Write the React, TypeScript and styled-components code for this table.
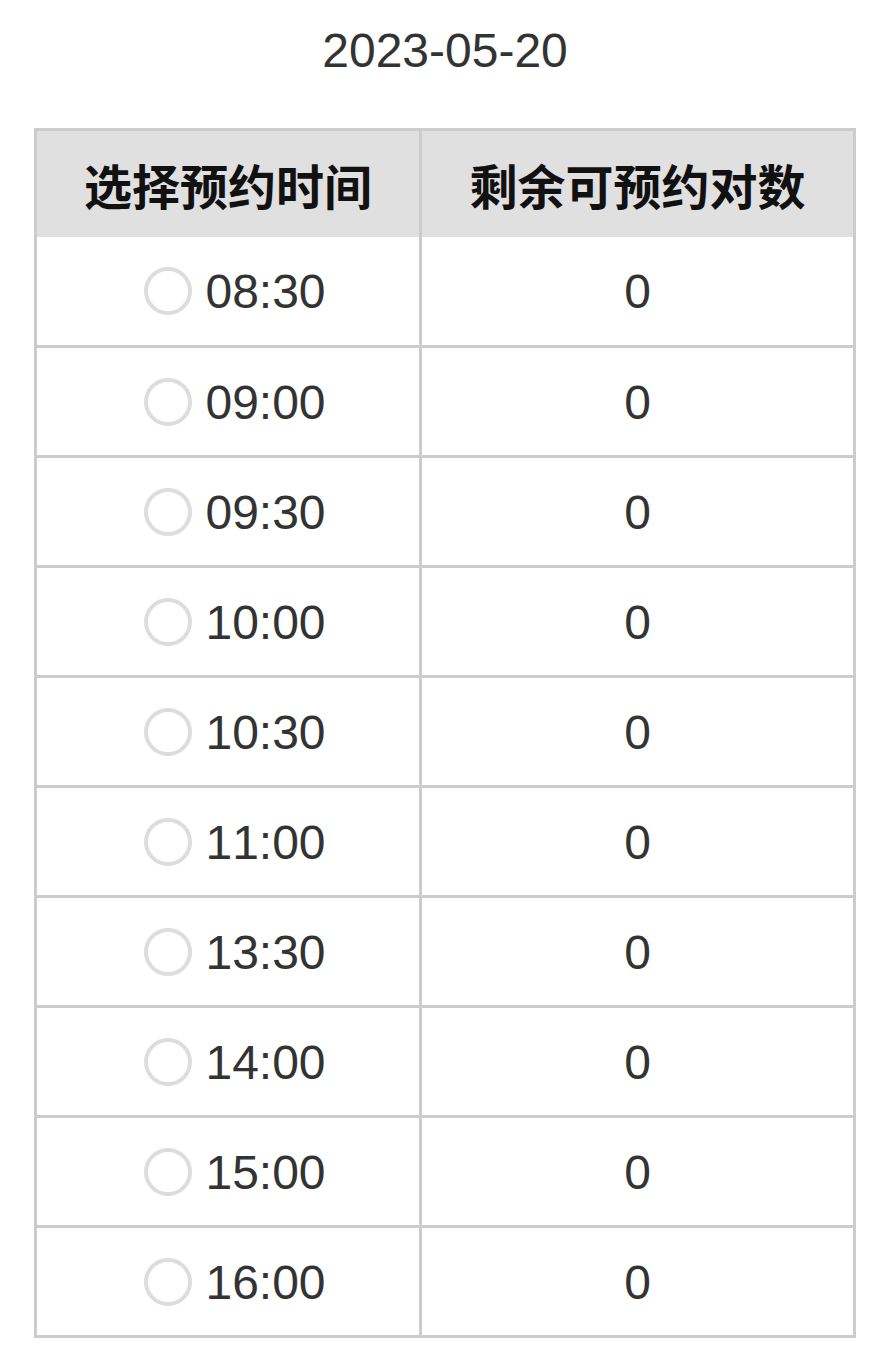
import React from "react";
import styled, { createGlobalStyle } from "styled-components";

const GlobalStyle = createGlobalStyle`
  html, body {
    margin: 0;
    padding: 0;
    background: #ffffff;
  }
  body {
    font-family: "Liberation Sans", Arial, "Noto Sans CJK SC", sans-serif;
    color: #333333;
  }
`;

const Page = styled.div`
  width: 822px;
  margin-left: 34px;
  padding-top: 23px;
  padding-bottom: 20px;
`;

const Title = styled.div`
  text-align: center;
  font-size: 48px;
  line-height: 56px;
  color: #333333;
  margin-bottom: 49px;
`;

const Table = styled.div`
  border: 3px solid #cccccc;
  display: flex;
  flex-direction: column;
`;

const Row = styled.div<{ $header?: boolean; $first?: boolean }>`
  display: grid;
  grid-template-columns: 385px 431px;
  height: ${(p) => (p.$header ? 106 : p.$first ? 108 : 107)}px;
  background: ${(p) => (p.$header ? "#e0e0e0" : "#ffffff")};
  border-top: ${(p) => (p.$header || p.$first ? "none" : "3px solid #cccccc")};
`;

const Cell = styled.div<{ $left?: boolean; $header?: boolean; $shift?: number }>`
  display: flex;
  align-items: center;
  justify-content: center;
  box-sizing: border-box;
  border-right: ${(p) => (p.$left ? "3px solid #cccccc" : "none")};
  padding-left: ${(p) => p.$shift ?? 0}px;
  font-size: 48px;
  font-weight: ${(p) => (p.$header ? 700 : 400)};
  color: ${(p) => (p.$header ? "#111111" : "#333333")};
  font-family: ${(p) =>
    p.$header
      ? `"Noto Sans CJK SC", "Liberation Sans", sans-serif`
      : `"Liberation Sans", Arial, "Noto Sans CJK SC", sans-serif`};
`;

const Radio = styled.span`
  display: inline-block;
  box-sizing: border-box;
  width: 48px;
  height: 48px;
  border-radius: 50%;
  border: 4px solid #dddddd;
  background: #ffffff;
  margin-right: 13px;
  flex: none;
`;

const TimeText = styled.span`
  line-height: 1;
  font-kerning: none;
  font-variant-numeric: tabular-nums;
  margin-top: 2px;
`;

const slots = [
  "08:30",
  "09:00",
  "09:30",
  "10:00",
  "10:30",
  "11:00",
  "13:30",
  "14:00",
  "15:00",
  "16:00",
];

export default function App() {
  return (
    <>
      <GlobalStyle />
      <Page>
        <Title>2023-05-20</Title>
        <Table>
          <Row $header>
            <Cell $left $header>
              选择预约时间
            </Cell>
            <Cell $header>剩余可预约对数</Cell>
          </Row>
          {slots.map((t, i) => (
            <Row key={t} $first={i === 0}>
              <Cell $left $shift={14}>
                <Radio />
                <TimeText>{t}</TimeText>
              </Cell>
              <Cell>
                <TimeText>0</TimeText>
              </Cell>
            </Row>
          ))}
        </Table>
      </Page>
    </>
  );
}
